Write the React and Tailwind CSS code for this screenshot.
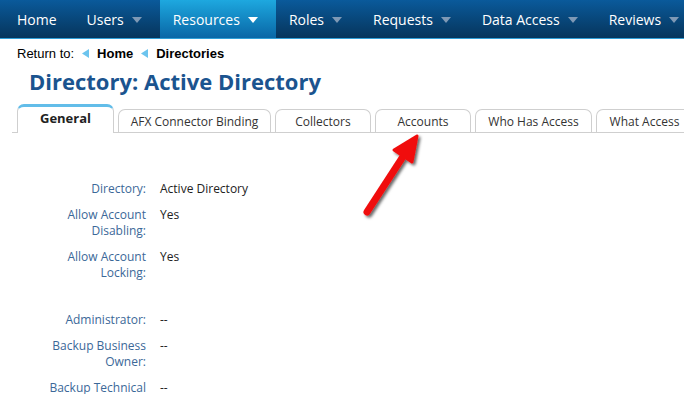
import React from "react";

const navItems = [
  { label: "Home", arrow: false },
  { label: "Users", arrow: true },
  { label: "Resources", arrow: true, active: true },
  { label: "Roles", arrow: true },
  { label: "Requests", arrow: true },
  { label: "Data Access", arrow: true },
  { label: "Reviews", arrow: true },
];

const tabs = [
  { label: "General", w: "w-[97px]", active: true },
  { label: "AFX Connector Binding", w: "w-[153px]" },
  { label: "Collectors", w: "w-[96px]" },
  { label: "Accounts", w: "w-[96px]" },
  { label: "Who Has Access", w: "w-[117px]" },
  { label: "What Access", w: "w-[97px]" },
];

function Caret({ active }) {
  return (
    <svg width="10" height="6" viewBox="0 0 10 6" className="ml-[8px] mt-[1px] shrink-0">
      <path d="M0 0 L10 0 L5 6 Z" fill={active ? "#ffffff" : "#7f99b5"} />
    </svg>
  );
}

function LeftTri() {
  return (
    <svg width="7" height="9" viewBox="0 0 7 9" className="mx-[8px]">
      <path d="M7 0 L7 9 L0 4.5 Z" fill="#6cc4ee" />
    </svg>
  );
}

const rows = [
  { label: ["Directory:"], value: "Active Directory" },
  { label: ["Allow Account", "Disabling:"], value: "Yes" },
  { label: ["Allow Account", "Locking:"], value: "Yes" },
  { spacer: true },
  { label: ["Administrator:"], value: "--" },
  { label: ["Backup Business", "Owner:"], value: "--" },
  { label: ["Backup Technical"], value: "--" },
];

export default function App() {
  return (
    <div className="relative w-[684px] h-[394px] overflow-hidden bg-white" style={{ fontFamily: "'Open Sans', sans-serif" }}>
      {/* Nav */}
      <div className="flex h-[39px] border-b border-[#2f9fd8] bg-gradient-to-b from-[#0a5a9b] to-[#06355c]">
        {navItems.map((it, i) => (
          <div
            key={i}
            className={
              "flex shrink-0 whitespace-nowrap items-center h-full text-[14px] text-white " +
              (i === 0 ? "pl-[17px] pr-[17px] " : "pl-[13px] pr-[18px] ") +
              (it.active ? "bg-gradient-to-b from-[#1ea8df] to-[#0a67a6]" : "")
            }
          >
            <span>{it.label}</span>
            {it.arrow && <Caret active={it.active} />}
          </div>
        ))}
      </div>

      {/* Breadcrumb */}
      <div className="flex items-center pl-[17px] h-[28px] pt-[1px] text-[13px] text-black" style={{ fontFamily: "'Liberation Sans', Arial, sans-serif" }}>
        <span>Return to:</span>
        <LeftTri />
        <span className="font-bold">Home</span>
        <LeftTri />
        <span className="font-bold">Directories</span>
      </div>

      {/* Title */}
      <div className="pl-[29px] h-[28px] flex items-center text-[22px] font-bold text-[#1b548f] leading-none">
        Directory: Active Directory
      </div>

      {/* Tabs */}
      <div className="flex items-end ml-[12px] mt-[9px] h-[29px] border-b border-[#cfcfcf] pl-[5px] gap-[4px]">
        {tabs.map((t, i) =>
          t.active ? (
            <div
              key={i}
              className={t.w + " shrink-0 whitespace-nowrap h-[29px] -mb-px bg-white border border-b-0 border-[#cfcfcf] border-t-[3px] border-t-[#62bde9] rounded-t-[7px] flex items-center justify-center text-[13px] font-bold text-[#222] pb-[3px]"}
            >
              {t.label}
            </div>
          ) : (
            <div
              key={i}
              className={t.w + " shrink-0 whitespace-nowrap h-[23px] border border-b-0 border-[#cfcfcf] rounded-t-[7px] flex items-center justify-center text-[12px] text-[#333] pt-[1px]"}
            >
              {t.label}
            </div>
          )
        )}
      </div>

      {/* Content */}
      <div className="pt-[48px] text-[12px] leading-[16px]">
        {rows.map((r, i) =>
          r.spacer ? (
            <div key={i} className="h-[21px]" />
          ) : (
            <div key={i} className="flex mb-[10px]">
              <div className="w-[146px] text-right text-[#3b6898]">
                {r.label.map((l, j) => (
                  <div key={j}>{l}</div>
                ))}
              </div>
              <div className="pl-[14px] text-[#222]">{r.value}</div>
            </div>
          )
        )}
      </div>

      {/* Red arrow annotation */}
      <svg className="absolute left-[350px] top-[128px]" width="90" height="100" viewBox="0 0 90 100">
        <defs>
          <filter id="sh" x="-30%" y="-30%" width="160%" height="160%">
            <feDropShadow dx="2" dy="2" stdDeviation="1.5" floodColor="#000" floodOpacity="0.6" />
          </filter>
        </defs>
        <g filter="url(#sh)">
          <line x1="17" y1="84" x2="56" y2="24" stroke="#f01010" strokeWidth="7" strokeLinecap="round" />
          <path d="M67 8 L44 22 L62 34 Z" fill="#f01010" stroke="#f01010" strokeWidth="3" strokeLinejoin="round" />
        </g>
      </svg>
    </div>
  );
}
